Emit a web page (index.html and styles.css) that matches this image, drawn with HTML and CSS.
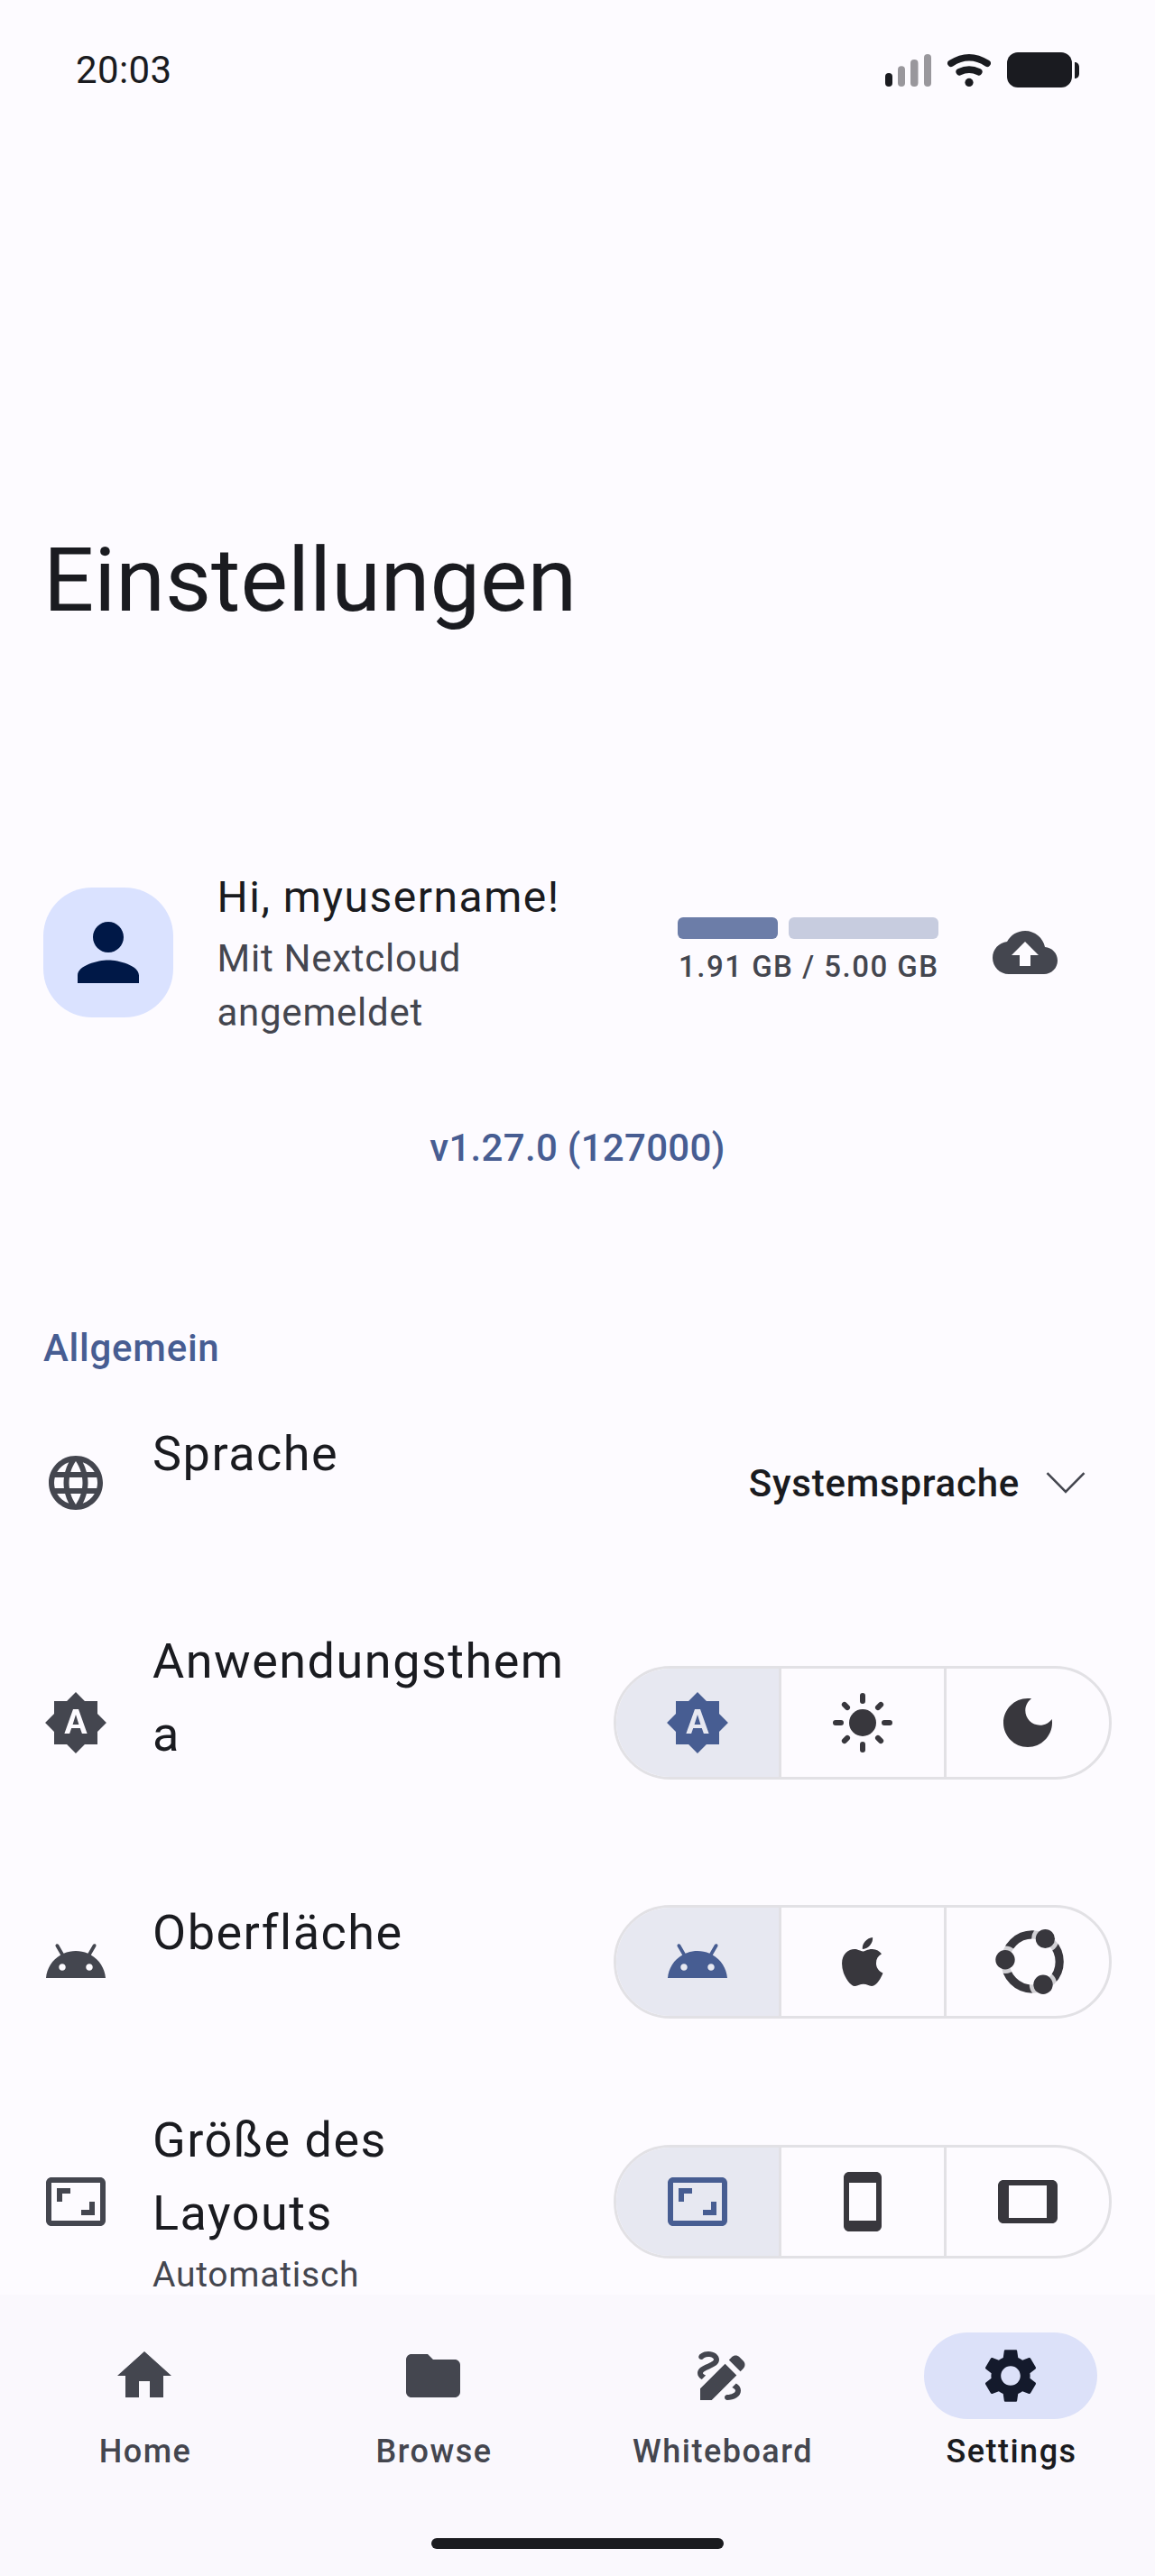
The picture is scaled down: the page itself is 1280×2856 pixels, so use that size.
FILE: index.html
```html
<!DOCTYPE html>
<html lang="de">
<head>
<meta charset="utf-8">
<title>Einstellungen</title>
<link rel="stylesheet" href="styles.css">
</head>
<body>
<svg class="sprite" aria-hidden="true">
  <symbol id="auto" viewBox="0 0 24 24"><path d="M10.85 12.65h2.3L12 9l-1.15 3.65zM20 8.69V4h-4.69L12 .69 8.69 4H4v4.69L.69 12 4 15.31V20h4.69L12 23.31 15.31 20H20v-4.69L23.31 12 20 8.69zM14.3 16l-.7-2h-3.2l-.7 2H7.8L11 7h2l3.2 9h-1.9z"/></symbol>
  <symbol id="android" viewBox="0 0 24 24"><path d="M17.6 9.48l1.84-3.18c.16-.31.04-.69-.26-.85-.29-.15-.65-.06-.83.22l-1.88 3.24c-2.86-1.21-6.08-1.21-8.94 0L5.65 5.67c-.19-.29-.58-.38-.87-.2-.28.18-.37.54-.22.83L6.4 9.48C3.3 11.25 1.28 14.44 1 18h22c-.28-3.56-2.3-6.75-5.4-8.52zM7 15.25c-.69 0-1.25-.56-1.25-1.25S6.31 12.75 7 12.75 8.25 13.31 8.25 14 7.69 15.25 7 15.25zm10 0c-.69 0-1.25-.56-1.25-1.25s.56-1.25 1.25-1.25 1.25.56 1.25 1.25-.56 1.25-1.25 1.25z"/></symbol>
  <symbol id="ratio" viewBox="0 0 24 24"><path d="M19 12h-2v3h-3v2h5v-5zM7 9h3V7H5v5h2V9zm14-6H3c-1.1 0-2 .9-2 2v14c0 1.1.9 2 2 2h18c1.1 0 2-.9 2-2V5c0-1.1-.9-2-2-2zm0 16.01H3V4.99h18v14.02z"/></symbol>
</svg>

<main class="content">
  <header class="status">
    <span class="time">20:03</span>
    <svg class="status-icons" viewBox="0 0 216 40" width="216" height="40">
      <rect x="1" y="23" width="8" height="15" rx="4"/>
      <g class="dim">
        <rect x="15" y="15.3" width="8" height="22.7" rx="4"/>
        <rect x="29" y="8" width="8.5" height="30" rx="4"/>
        <rect x="44" y="2" width="8" height="36" rx="4"/>
      </g>
      <path class="wave" d="M73.9 12.3Q94-.8 114.1 12.3M83.2 21.7Q94 16.6 104.8 21.7"/>
      <circle cx="94" cy="33.4" r="4.6"/>
      <rect x="136" y="0" width="72" height="39" rx="12"/>
      <path d="M211 11c3.5 0 5 2.500 5 5.500v7c0 3-1.500 5.500-5 5.500z"/>
    </svg>
  </header>

  <h1 class="title">Einstellungen</h1>

  <section class="account">
    <div class="avatar">
      <svg viewBox="0 0 24 24" width="102" height="102"><path d="M12 12c2.210 0 4-1.790 4-4s-1.790-4-4-4-4 1.790-4 4 1.790 4 4 4zm0 2c-2.670 0-8 1.340-8 4v2h16v-2c0-2.660-5.330-4-8-4z"/></svg>
    </div>
    <div class="who">
      <p class="hello">Hi, myusername!</p>
      <p class="via">Mit Nextcloud<br>angemeldet</p>
    </div>
    <div class="quota">
      <div class="bar"><span class="used"></span><span class="free"></span></div>
      <p class="amount">1.91 GB / 5.00 GB</p>
    </div>
    <svg class="icon cloud" viewBox="0 0 24 24"><path d="M19.35 10.04C18.67 6.59 15.64 4 12 4 9.11 4 6.6 5.64 5.35 8.04 2.34 8.36 0 10.91 0 14c0 3.31 2.69 6 6 6h13c2.76 0 5-2.24 5-5 0-2.64-2.05-4.78-4.65-4.96zM14 13v4h-4v-4H7l5-5 5 5h-3z"/></svg>
  </section>

  <p class="version">v1.27.0 (127000)</p>

  <h2 class="section">Allgemein</h2>

  <div class="rows">
    <div class="row">
      <svg class="icon" viewBox="0 0 24 24"><path d="M11.99 2C6.47 2 2 6.48 2 12s4.47 10 9.99 10C17.52 22 22 17.52 22 12S17.52 2 11.99 2zm6.93 6h-2.95c-.32-1.25-.78-2.45-1.38-3.56 1.84.63 3.37 1.91 4.33 3.56zM12 4.04c.83 1.2 1.48 2.53 1.91 3.96h-3.82c.43-1.43 1.08-2.76 1.91-3.96zM4.26 14C4.1 13.36 4 12.69 4 12s.1-1.36.26-2h3.38c-.08.66-.14 1.32-.14 2s.06 1.34.14 2H4.26zm.82 2h2.95c.32 1.25.78 2.45 1.38 3.56-1.84-.63-3.37-1.9-4.33-3.56zm2.95-8H5.08c.96-1.66 2.49-2.93 4.33-3.56C8.81 5.55 8.35 6.75 8.03 8zM12 19.96c-.83-1.2-1.48-2.53-1.91-3.96h3.82c-.43 1.43-1.08 2.76-1.91 3.96zM14.34 14H9.66c-.09-.66-.16-1.32-.16-2s.07-1.35.16-2h4.68c.09.65.16 1.32.16 2s-.07 1.34-.16 2zm.25 5.56c.6-1.11 1.06-2.31 1.38-3.56h2.95c-.96 1.65-2.49 2.93-4.33 3.56zM16.36 14c.08-.66.14-1.32.14-2s-.06-1.34-.14-2h3.38c.16.64.26 1.31.26 2s-.1 1.36-.26 2h-3.38z"/></svg>
      <div class="label short">Sprache</div>
      <div class="select">
        <span class="value">Systemsprache</span>
        <svg class="chevron" viewBox="0 0 44 26" width="44" height="26"><path d="M1.500 2.200L22 22.800 42.500 2.200"/></svg>
      </div>
    </div>

    <div class="row">
      <svg class="icon"><use href="#auto"/></svg>
      <div class="label">Anwendungsthem<br>a<div class="sub"></div></div>
      <div class="segments">
        <div class="segment active"><svg class="icon"><use href="#auto"/></svg></div>
        <div class="segment"><svg class="icon" viewBox="0 0 24 24"><circle cx="12" cy="12" r="5"/><path class="rays" d="M12 2v2M12 20v2M2 12h2M20 12h2M5.285 5.285l1.060 1.060M17.655 17.655l1.060 1.060M18.715 5.285l-1.060 1.060M6.345 17.655l-1.060 1.060"/></svg></div>
        <div class="segment"><svg class="icon" viewBox="0 0 24 24"><path d="M12 3c-4.970 0-9 4.030-9 9s4.030 9 9 9 9-4.030 9-9c0-.46-.04-.92-.1-1.360-.98 1.370-2.580 2.260-4.400 2.260-2.980 0-5.400-2.420-5.400-5.400 0-1.810.89-3.420 2.260-4.400C12.920 3.040 12.460 3 12 3z"/></svg></div>
      </div>
    </div>

    <div class="row">
      <svg class="icon"><use href="#android"/></svg>
      <div class="label short">Oberfläche</div>
      <div class="segments">
        <div class="segment active"><svg class="icon"><use href="#android"/></svg></div>
        <div class="segment"><svg viewBox="4 32 376.600 448" width="45.500" height="54"><path d="M318.700 268.700c-.2-36.700 16.400-64.400 50-84.800-18.800-26.900-47.200-41.700-84.700-44.600-35.500-2.800-74.300 20.700-88.500 20.700-15 0-49.400-19.700-76.400-19.700C63.300 141.200 4 184.800 4 273.500q0 39.300 14.400 81.200c12.800 36.700 59 126.700 107.200 125.200 25.200-.6 43-17.900 75.800-17.900 31.800 0 48.300 17.900 76.400 17.900 48.600-.7 90.400-82.500 102.600-119.300-65.200-30.700-61.700-90-61.700-91.900zm-56.600-164.200c27.300-32.400 24.800-61.900 24-72.500-24.100 1.400-52 16.400-67.900 34.900-17.500 19.800-27.800 44.300-25.600 71.900 26.100 2 49.900-11.400 69.500-34.300z"/></svg></div>
        <div class="segment"><svg viewBox="-42 -38 80 76" width="80" height="76">
          <mask id="gaps" maskUnits="userSpaceOnUse" x="-42" y="-38" width="84" height="76">
            <rect x="-42" y="-38" width="84" height="76" fill="#fff"/>
            <circle cx="-27" cy="-2.300" r="15.200"/><circle cx="17.400" cy="-25.500" r="15.200"/><circle cx="15" cy="25.200" r="15.200"/>
          </mask>
          <circle class="ring" cx="3.100" cy="0" r="30.100" mask="url(#gaps)"/>
          <circle cx="-27" cy="-2.300" r="10.700"/><circle cx="17.400" cy="-25.500" r="10.600"/><circle cx="15" cy="25.200" r="10.700"/>
        </svg></div>
      </div>
    </div>

    <div class="row">
      <svg class="icon"><use href="#ratio"/></svg>
      <div class="label">Größe des<br>Layouts<div class="sub">Automatisch</div></div>
      <div class="segments">
        <div class="segment active"><svg class="icon"><use href="#ratio"/></svg></div>
        <div class="segment"><svg class="icon" viewBox="0 0 24 24"><path d="M17 1.010L7 1c-1.100 0-2 .9-2 2v18c0 1.100.9 2 2 2h10c1.100 0 2-.9 2-2V3c0-1.100-.9-1.990-2-1.990zM17 19H7V5h10v14z"/></svg></div>
        <div class="segment"><svg class="icon" viewBox="0 0 24 24"><path d="M21 4H3c-1.100 0-2 .9-2 2v12c0 1.100.9 2 2 2h18c1.100 0 1.990-.9 1.990-2L23 6c0-1.100-.9-2-2-2zm-2 14H5V6h14v12z"/></svg></div>
      </div>
    </div>
  </div>
</main>

<nav class="nav">
  <div class="tabs">
    <a class="tab">
      <span class="pill"><svg class="icon" viewBox="0 0 24 24"><path d="M10 20v-6h4v6h5v-8h3L12 3 2 12h3v8z"/></svg></span>
      <span class="tab-label">Home</span>
    </a>
    <a class="tab">
      <span class="pill"><svg class="icon" viewBox="0 0 24 24"><path d="M10 4H4c-1.100 0-1.990.9-1.990 2L2 18c0 1.100.9 2 2 2h16c1.100 0 2-.9 2-2V8c0-1.100-.9-2-2-2h-8l-2-2z"/></svg></span>
      <span class="tab-label">Browse</span>
    </a>
    <a class="tab">
      <span class="pill"><svg class="icon" viewBox="0 0 24 24"><path d="M18.850 10.390l1.060-1.060c.78-.78.78-2.050 0-2.830L18.500 5.090c-.78-.78-2.050-.78-2.830 0l-1.060 1.060 4.240 4.240zm-5.660-2.830L4 16.760V21h4.240l9.190-9.190-4.240-4.250zM19 17.500c0 2.190-2.540 3.500-5 3.500-.55 0-1-.45-1-1s.45-1 1-1c1.540 0 3-.73 3-1.500 0-.47-.48-.87-1.230-1.200l1.480-1.480c1.070.63 1.750 1.470 1.750 2.680zM4.580 13.350C3.610 12.790 3 12.060 3 11c0-1.800 1.890-2.630 3.560-3.360C7.590 7.180 9 6.560 9 6c0-.41-.78-1-2-1-1.260 0-1.800.61-1.830.64-.35.41-.98.46-1.400.12-.41-.34-.49-.95-.15-1.380C3.730 4.240 4.760 3 7 3s4 1.320 4 3c0 1.870-1.930 2.720-3.640 3.470C6.420 9.880 5 10.500 5 11c0 .31.43.6 1.070.86l-1.490 1.490z"/></svg></span>
      <span class="tab-label">Whiteboard</span>
    </a>
    <a class="tab current">
      <span class="pill"><svg class="icon" viewBox="0 0 24 24"><path d="M19.140 12.940c.04-.3.06-.61.06-.94 0-.32-.02-.64-.07-.94l2.030-1.580c.18-.14.23-.41.12-.61l-1.920-3.320c-.12-.22-.37-.29-.59-.22l-2.390.96c-.5-.38-1.030-.7-1.620-.94l-.36-2.540c-.04-.24-.24-.41-.48-.41h-3.840c-.24 0-.43.17-.47.41l-.36 2.540c-.59.24-1.130.57-1.620.94l-2.390-.96c-.22-.08-.47 0-.59.22L2.740 8.870c-.12.21-.08.47.12.61l2.030 1.580c-.05.3-.09.63-.09.94s.02.64.07.94l-2.030 1.580c-.18.14-.23.41-.12.61l1.920 3.320c.12.22.37.29.59.22l2.390-.96c.5.38 1.030.7 1.620.94l.36 2.540c.05.24.24.41.48.41h3.840c.24 0 .44-.17.47-.41l.36-2.540c.59-.24 1.130-.56 1.620-.94l2.390.96c.22.08.47 0 .59-.22l1.920-3.320c.12-.22.07-.47-.12-.61l-2.010-1.580zM12 15.600c-1.980 0-3.600-1.620-3.600-3.600s1.620-3.600 3.600-3.600 3.600 1.620 3.600 3.600-1.620 3.600-3.600 3.600z"/></svg></span>
      <span class="tab-label">Settings</span>
    </a>
  </div>
  <div class="handle"></div>
</nav>
</body>
</html>
```
FILE: styles.css
```css
* { box-sizing: border-box; }

body {
  margin: 0;
  width: 1280px;
  height: 2856px;
  display: flex;
  flex-direction: column;
  overflow: hidden;
  background: #fdfbff;
  color: #1a1b20;
  font-family: Roboto, sans-serif;
}

h1, h2, p { margin: 0; font-weight: 400; }
svg { display: block; fill: currentColor; flex: none; }
.sprite { position: absolute; width: 0; height: 0; }
.icon { width: 72px; height: 72px; }

.content { height: 2544px; flex: none; overflow: hidden; }

/* Status bar */
.status {
  height: 155px;
  padding: 0 84px;
  display: flex;
  align-items: center;
  justify-content: space-between;
}
.time { font-size: 42px; letter-spacing: 0.4px; }
.dim { fill: #99979c; }
.wave { fill: none; stroke: currentColor; stroke-width: 7.6; stroke-linecap: round; }

.title {
  margin: 428px 48px 0;
  font-size: 99px;
  line-height: 120px;
}

/* Account */
.account {
  height: 198px;
  margin-top: 254px;
  padding-left: 48px;
  display: flex;
  align-items: center;
}
.avatar {
  width: 144px;
  height: 144px;
  border-radius: 54px;
  background: #dae2ff;
  color: #001847;
  display: flex;
  align-items: center;
  justify-content: center;
}
.who { width: 510.5px; margin-left: 48.5px; padding-bottom: 2px; }
.hello { font-size: 48px; line-height: 76px; letter-spacing: 1.5px; }
.via { font-size: 42px; line-height: 60px; letter-spacing: 0.75px; color: #44464f; }
.quota { width: 289px; }
.bar { display: flex; gap: 12px; height: 24px; }
.used, .free { border-radius: 6px; }
.used { width: 110.5px; background: #6c7da8; }
.free { flex: 1; background: #c7ccdf; }
.amount {
  margin-top: 7px;
  padding-left: 1px;
  font-size: 33px;
  font-weight: 500;
  line-height: 48px;
  letter-spacing: 1.5px;
  color: #44464f;
  white-space: nowrap;
}
.cloud { margin-left: 60px; color: #44464f; }

.version {
  margin-top: 88px;
  text-align: center;
}
.version, .section {
  font-size: 42px;
  font-weight: 500;
  line-height: 60px;
  letter-spacing: 0.3px;
  color: #475d92;
}
.section { margin: 162px 48px 0; letter-spacing: 0.75px; }

/* Setting rows */
.rows { margin-top: 46px; display: flex; flex-direction: column; gap: 84px; }
.row { padding: 0 48px; display: flex; align-items: center; }
.row > .icon { color: #44464f; }
.label {
  flex: 1;
  margin-left: 49px;
  font-size: 54px;
  line-height: 81px;
  letter-spacing: 1.5px;
}
.label.short { padding-bottom: 65px; }
.sub {
  height: 55px;
  font-size: 39px;
  line-height: 57px;
  letter-spacing: 0.75px;
  color: #44464f;
}
.select {
  padding-right: 29px;
  display: flex;
  align-items: center;
  gap: 29px;
  font-size: 42px;
  font-weight: 500;
  line-height: 60px;
  letter-spacing: 0.75px;
}
.value { padding-top: 2px; }
.chevron { fill: none; stroke: #44464f; stroke-width: 2.6; }

.segments {
  width: 552px;
  height: 126px;
  display: flex;
  overflow: hidden;
  border: 3px solid #e2e1e5;
  border-radius: 63px;
}
.segment {
  flex: 1;
  display: flex;
  align-items: center;
  justify-content: center;
  color: #38373d;
}
.segment + .segment { border-left: 3px solid #e2e1e5; }
.segment.active { background: #e7e8f1; color: #475d92; }
.rays { fill: none; stroke: currentColor; stroke-width: 2; stroke-linecap: round; }
.ring { fill: none; stroke: currentColor; stroke-width: 9.2; }

/* Bottom navigation */
.nav { flex: 1; padding-top: 42px; background: #faf8fd; }
.tabs { display: flex; }
.tab {
  flex: 1;
  display: flex;
  flex-direction: column;
  align-items: center;
  gap: 12px;
  font-size: 36px;
  font-weight: 500;
  line-height: 48px;
  letter-spacing: 1.5px;
  color: #44464f;
}
.tab-label { padding-left: 2px; }
.pill {
  width: 192px;
  height: 96px;
  border-radius: 48px;
  display: flex;
  align-items: center;
  justify-content: center;
}
.current { color: #1a1b20; }
.current .pill { background: #dce1f9; color: #141a2c; }
.handle {
  width: 324px;
  height: 12px;
  margin: 72px auto 0;
  border-radius: 6px;
  background: #1a1b1f;
}
```
